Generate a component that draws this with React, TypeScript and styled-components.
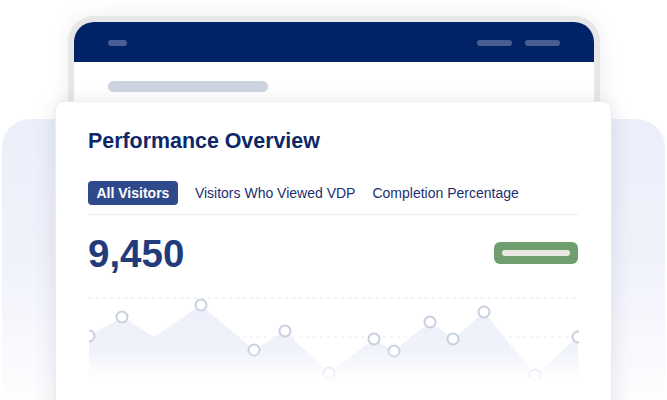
import React from 'react';
import styled, { createGlobalStyle } from 'styled-components';

const GlobalStyle = createGlobalStyle`
    html, body {
        margin: 0;
        padding: 0;
        background: #FFF;
    }
    body {
        font-family: "Liberation Sans", Arial, sans-serif;
    }
`

// chart points, relative to the chart box (x from 88, y from 290)
const points: { x: number, y: number, dot: boolean }[] = [
    { x: 0, y: 46, dot: true },
    { x: 33, y: 27, dot: true },
    { x: 65, y: 47, dot: false },
    { x: 112, y: 15, dot: true },
    { x: 165, y: 60, dot: true },
    { x: 196, y: 41, dot: true },
    { x: 240, y: 83, dot: true },
    { x: 285, y: 49, dot: true },
    { x: 305, y: 61, dot: true },
    { x: 341, y: 32, dot: true },
    { x: 364, y: 49, dot: true },
    { x: 395, y: 22, dot: true },
    { x: 446, y: 85, dot: true },
    { x: 489, y: 47, dot: true },
];

const tabs = ['All Visitors', 'Visitors Who Viewed VDP', 'Completion Percentage'];

const CHART_W = 490;
const CHART_H = 110;

function AreaChart() {
    const line = points.map((p) => `${p.x},${p.y}`).join(' ');
    const area = `0,${CHART_H} ${line} ${CHART_W},${CHART_H}`;
    return (
        <ChartSvg width={CHART_W} height={CHART_H} viewBox={`0 0 ${CHART_W} ${CHART_H}`}>
            <defs>
                <linearGradient id="areaFill" x1="0" y1="0" x2="0" y2="1">
                    <stop offset="0%" stopColor="#EDF0FA" />
                    <stop offset="60%" stopColor="#F1F3FB" />
                    <stop offset="100%" stopColor="#FFFFFF" />
                </linearGradient>
                <linearGradient id="fadeOut" x1="0" y1="0" x2="0" y2="1">
                    <stop offset="0%" stopColor="#FFFFFF" stopOpacity="0" />
                    <stop offset="100%" stopColor="#FFFFFF" stopOpacity="1" />
                </linearGradient>
            </defs>
            <line x1="0" y1="8" x2={CHART_W} y2="8" stroke="#E5E7EF" strokeWidth="1" strokeDasharray="3 4" />
            <polygon points={area} fill="url(#areaFill)" />
            <line x1="0" y1="47" x2={CHART_W} y2="47" stroke="#E8EAF1" strokeWidth="1" strokeDasharray="3 4" />
            {points.filter((p) => p.dot).map((p, i) => (
                <circle key={i} cx={p.x} cy={p.y} r="5.5" fill="#FFF" stroke="#C8CFE0" strokeWidth="2" />
            ))}
            <rect x="0" y="58" width={CHART_W} height="36" fill="url(#fadeOut)" />
            <rect x="0" y="94" width={CHART_W} height={CHART_H - 94} fill="#FFF" />
        </ChartSvg>
    );
}

function App() {
    return (
        <>
            <GlobalStyle />
            <Stage>
                <Backdrop />
                <DeviceFrame>
                    <DeviceHeader>
                        <HeaderPill $w={19} />
                        <HeaderPills>
                            <HeaderPill $w={35} />
                            <HeaderPill $w={35} />
                        </HeaderPills>
                    </DeviceHeader>
                    <DeviceBody>
                        <SearchPill />
                    </DeviceBody>
                </DeviceFrame>
                <Card>
                    <Title>Performance Overview</Title>
                    <TabRow>
                        {tabs.map((t, i) => (
                            <Tab key={t} $active={i === 0}>{t}</Tab>
                        ))}
                    </TabRow>
                    <Divider />
                    <StatRow>
                        <BigNumber>9,450</BigNumber>
                        <Badge>
                            <BadgeBar />
                        </Badge>
                    </StatRow>
                    <AreaChart />
                </Card>
            </Stage>
        </>
    );
}

export default App;

const Stage = styled.div`
    display: grid;
    width: 667px;
    height: 400px;
    overflow: hidden;
    background: #FFF;

    & > * {
        grid-area: 1 / 1;
        align-self: start;
        justify-self: start;
    }
`

const Backdrop = styled.div`
    width: 663px;
    height: 300px;
    margin: 119px 0 0 2px;
    border-radius: 28px 28px 0 0;
    background: linear-gradient(180deg, #ECEFFA 0%, #F0F2FB 45%, #FAFAFE 80%, #FFF 100%);
`

const DeviceFrame = styled.div`
    display: flex;
    flex-direction: column;
    width: 520px;
    height: 120px;
    margin: 16px 0 0 68px;
    border: 6px solid #E7E7E9;
    border-bottom: none;
    border-radius: 26px 26px 0 0;
    overflow: hidden;
    background: #FFF;
    box-shadow: 0 0 22px rgba(0, 0, 0, 0.07);
`

const DeviceHeader = styled.div`
    display: flex;
    height: 40px;
    padding: 0 34px;
    justify-content: space-between;
    align-items: center;
    flex-shrink: 0;
    background: #002266;
`

const HeaderPills = styled.div`
    display: flex;
    gap: 13px;
`

const HeaderPill = styled.div<{ $w: number }>`
    width: ${(p) => p.$w}px;
    height: 6px;
    margin-top: 1px;
    border-radius: 3px;
    background: #4A5E94;
`

const DeviceBody = styled.div`
    display: flex;
    padding: 19px 34px 0;
`

const SearchPill = styled.div`
    width: 160px;
    height: 11px;
    border-radius: 6px;
    background: #CDD4E1;
`

const Card = styled.div`
    display: flex;
    flex-direction: column;
    box-sizing: border-box;
    width: 557px;
    height: 320px;
    margin: 101px 0 0 55px;
    padding: 27px 33px 0 33px;
    border: 1px solid #ECECF0;
    border-radius: 9px;
    background: #FFF;
    box-shadow: 0 4px 22px rgba(40, 50, 90, 0.13);
`

const Title = styled.div`
    margin-left: -1px;
    color: #0E2768;
    font-size: 21.4px;
    font-weight: 700;
    line-height: 24px;
`

const TabRow = styled.div`
    display: flex;
    align-items: center;
    gap: 17px;
    margin-top: 28px;
    margin-left: -1px;
`

const Tab = styled.div<{ $active: boolean }>`
    display: flex;
    height: 24px;
    align-items: center;
    padding: ${(p) => (p.$active ? '0 8.5px' : '0')};
    border-radius: 4px;
    background: ${(p) => (p.$active ? '#2E4A8A' : 'transparent')};
    color: ${(p) => (p.$active ? '#FFF' : '#1B2F72')};
    font-size: 14px;
    font-weight: ${(p) => (p.$active ? 700 : 400)};
    white-space: nowrap;
`

const Divider = styled.div`
    height: 1px;
    margin-top: 9px;
    background: #F2E9EE;
`

const StatRow = styled.div`
    display: flex;
    justify-content: space-between;
    align-items: center;
    margin-top: 17px;
`

const BigNumber = styled.div`
    margin-left: -1px;
    color: #223B7B;
    font-size: 38.5px;
    font-weight: 700;
    line-height: 44px;
`

const Badge = styled.div`
    display: flex;
    width: 84px;
    height: 22px;
    margin-top: -2px;
    justify-content: center;
    align-items: center;
    border-radius: 6px;
    background: #6F9F6F;
`

const BadgeBar = styled.div`
    width: 68px;
    height: 6px;
    border-radius: 3px;
    background: #E8E8E2;
`

const ChartSvg = styled.svg`
    display: block;
    margin-top: 14px;
    overflow: hidden;
`
